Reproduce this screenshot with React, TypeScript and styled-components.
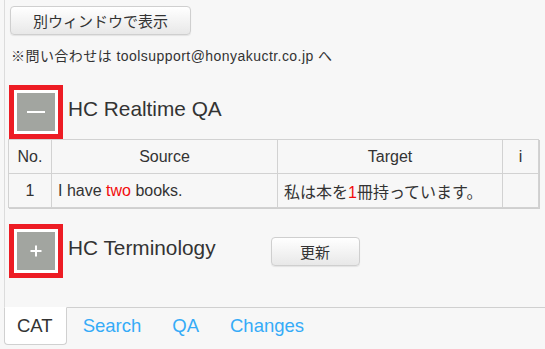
import styled, { createGlobalStyle } from 'styled-components';

const GlobalStyle = createGlobalStyle`
  html, body {
    margin: 0;
    padding: 0;
    height: 100%;
    background: #f7f7f7;
  }
  body {
    font-family: 'Liberation Sans', 'Noto Sans CJK JP', Arial, sans-serif;
    color: #333;
  }
`;

const Hit = styled.span`
  color: #f20c0c;
`;

type Row = { no: number; source: React.ReactNode; target: React.ReactNode };

const tabs = ['CAT', 'Search', 'QA', 'Changes'];

const App = () => {
  const rows: Row[] = [
    {
      no: 1,
      source: (
        <>
          I have <Hit>two</Hit> books.
        </>
      ),
      target: (
        <>
          私は本を<Hit>1</Hit>冊持っています。
        </>
      ),
    },
  ];

  return (
    <Page>
      <GlobalStyle />
      <Main>
        <PlainButton>別ウィンドウで表示</PlainButton>
        <Note>※問い合わせは toolsupport@honyakuctr.co.jp へ</Note>

        <SectionHead>
          <Toggle $isOpen />
          <Heading>HC Realtime QA</Heading>
        </SectionHead>

        <QaTable>
          <colgroup>
            <col style={{ width: 43 }} />
            <col style={{ width: 226 }} />
            <col style={{ width: 225 }} />
            <col style={{ width: 36 }} />
          </colgroup>
          <thead>
            <tr>
              <Th>No.</Th>
              <Th>Source</Th>
              <Th>Target</Th>
              <Th>i</Th>
            </tr>
          </thead>
          <tbody>
            {rows.map(r => (
              <tr key={r.no}>
                <Td $align="center">{r.no}</Td>
                <Td>{r.source}</Td>
                <Td>{r.target}</Td>
                <Td />
              </tr>
            ))}
          </tbody>
        </QaTable>

        <SectionHead $spaced>
          <Toggle />
          <Heading>HC Terminology</Heading>
          <UpdateButton>更新</UpdateButton>
        </SectionHead>
      </Main>

      <TabBar>
        {tabs.map((t, i) => (
          <Tab key={t} $isActive={i === 0}>
            {t}
          </Tab>
        ))}
      </TabBar>
    </Page>
  );
};

const Page = styled.div`
  display: flex;
  flex-direction: column;
  height: 100vh;
  margin-left: 4px;
`;

const Main = styled.div`
  flex: 1;
  display: flex;
  flex-direction: column;
  align-items: flex-start;

  padding: 6px 6px 0 3px;
  border-left: 1px solid #dcdcdc;
`;

const buttonBase = `
  font-family: 'Liberation Sans', 'Noto Sans CJK JP', sans-serif;
  font-size: 15px;
  color: #333;
  height: 29px;
  border: 1px solid #cfcfcf;
  border-radius: 4px;
  background: linear-gradient(#ffffff, #e8e8e8);
  box-shadow: 0 1px 1px rgba(0, 0, 0, 0.08);
  cursor: pointer;
`;

const PlainButton = styled.button`
  ${buttonBase}
  margin-left: 2px;
  padding: 0 22px;
`;

const UpdateButton = styled.button`
  ${buttonBase}
  width: 89px;
  margin: 13px 0 0 55px;
  padding: 0;
`;

const Note = styled.div`
  margin: 13px 0 0 3px;
  font-size: 14px;
  letter-spacing: 0.45px;
  line-height: 17px;
`;

const SectionHead = styled.div<{ $spaced?: boolean }>`
  display: flex;
  align-items: flex-start;
  margin: ${({ $spaced }) => ($spaced ? '16px' : '20px')} 0 0 1px;
`;

const Toggle = styled.div<{ $isOpen?: boolean }>`
  position: relative;
  width: 38px;
  height: 38px;

  background: #a2a5a0;
  border: 3px solid #fff;
  outline: 5px solid #ed1c24;
  margin: 5px;

  &::before,
  &::after {
    content: '';
    position: absolute;
    left: 50%;
    top: 50%;
    background: #fff;
    transform: translate(-50%, -50%);
  }
  &::before {
    width: ${({ $isOpen }) => ($isOpen ? '18px' : '11px')};
    height: 2px;
  }
  &::after {
    display: ${({ $isOpen }) => ($isOpen ? 'none' : 'block')};
    width: 2px;
    height: 11px;
  }
`;

const Heading = styled.h2`
  margin: 12px 0 0 5px;
  font-size: 20.8px;
  font-weight: normal;
  line-height: 23px;
  color: #333;
`;

const QaTable = styled.table`
  width: 530px;
  table-layout: fixed;
  border-collapse: collapse;
  border: 1px solid #cfcfcf;
  box-shadow: 1px 1px 0 #cfcfcf;
  font-size: 16px;
`;

const Th = styled.th`
  height: 33px;
  padding: 0 6px;
  border: 1px solid #d2d2d2;
  font-weight: normal;
  text-align: center;
`;

const Td = styled.td<{ $align?: 'center' | 'left' }>`
  height: 33px;
  padding: 0 6px;
  border: 1px solid #d2d2d2;
  text-align: ${({ $align }) => $align || 'left'};
  white-space: nowrap;
`;

const TabBar = styled.div`
  display: flex;
  height: 42px;
  border-top: 1px solid #d0d0d0;
  box-sizing: border-box;
`;

const Tab = styled.div<{ $isActive?: boolean }>`
  display: flex;
  align-items: center;

  height: 38px;
  margin: -1px 0 0 ${({ $isActive }) => ($isActive ? '0' : '1px')};
  padding: ${({ $isActive }) => ($isActive ? '0 13px 0 12px' : '0 15px')};

  font-size: 18.5px;
  color: ${({ $isActive }) => ($isActive ? '#333' : '#35abf7')};
  background: ${({ $isActive }) => ($isActive ? '#fff' : 'transparent')};
  border: ${({ $isActive }) => ($isActive ? '1px solid #d0d0d0' : '0')};
  border-top-color: #fff;
  border-radius: 0 0 4px 4px;
  box-sizing: border-box;
  cursor: pointer;
`;

export default App;
